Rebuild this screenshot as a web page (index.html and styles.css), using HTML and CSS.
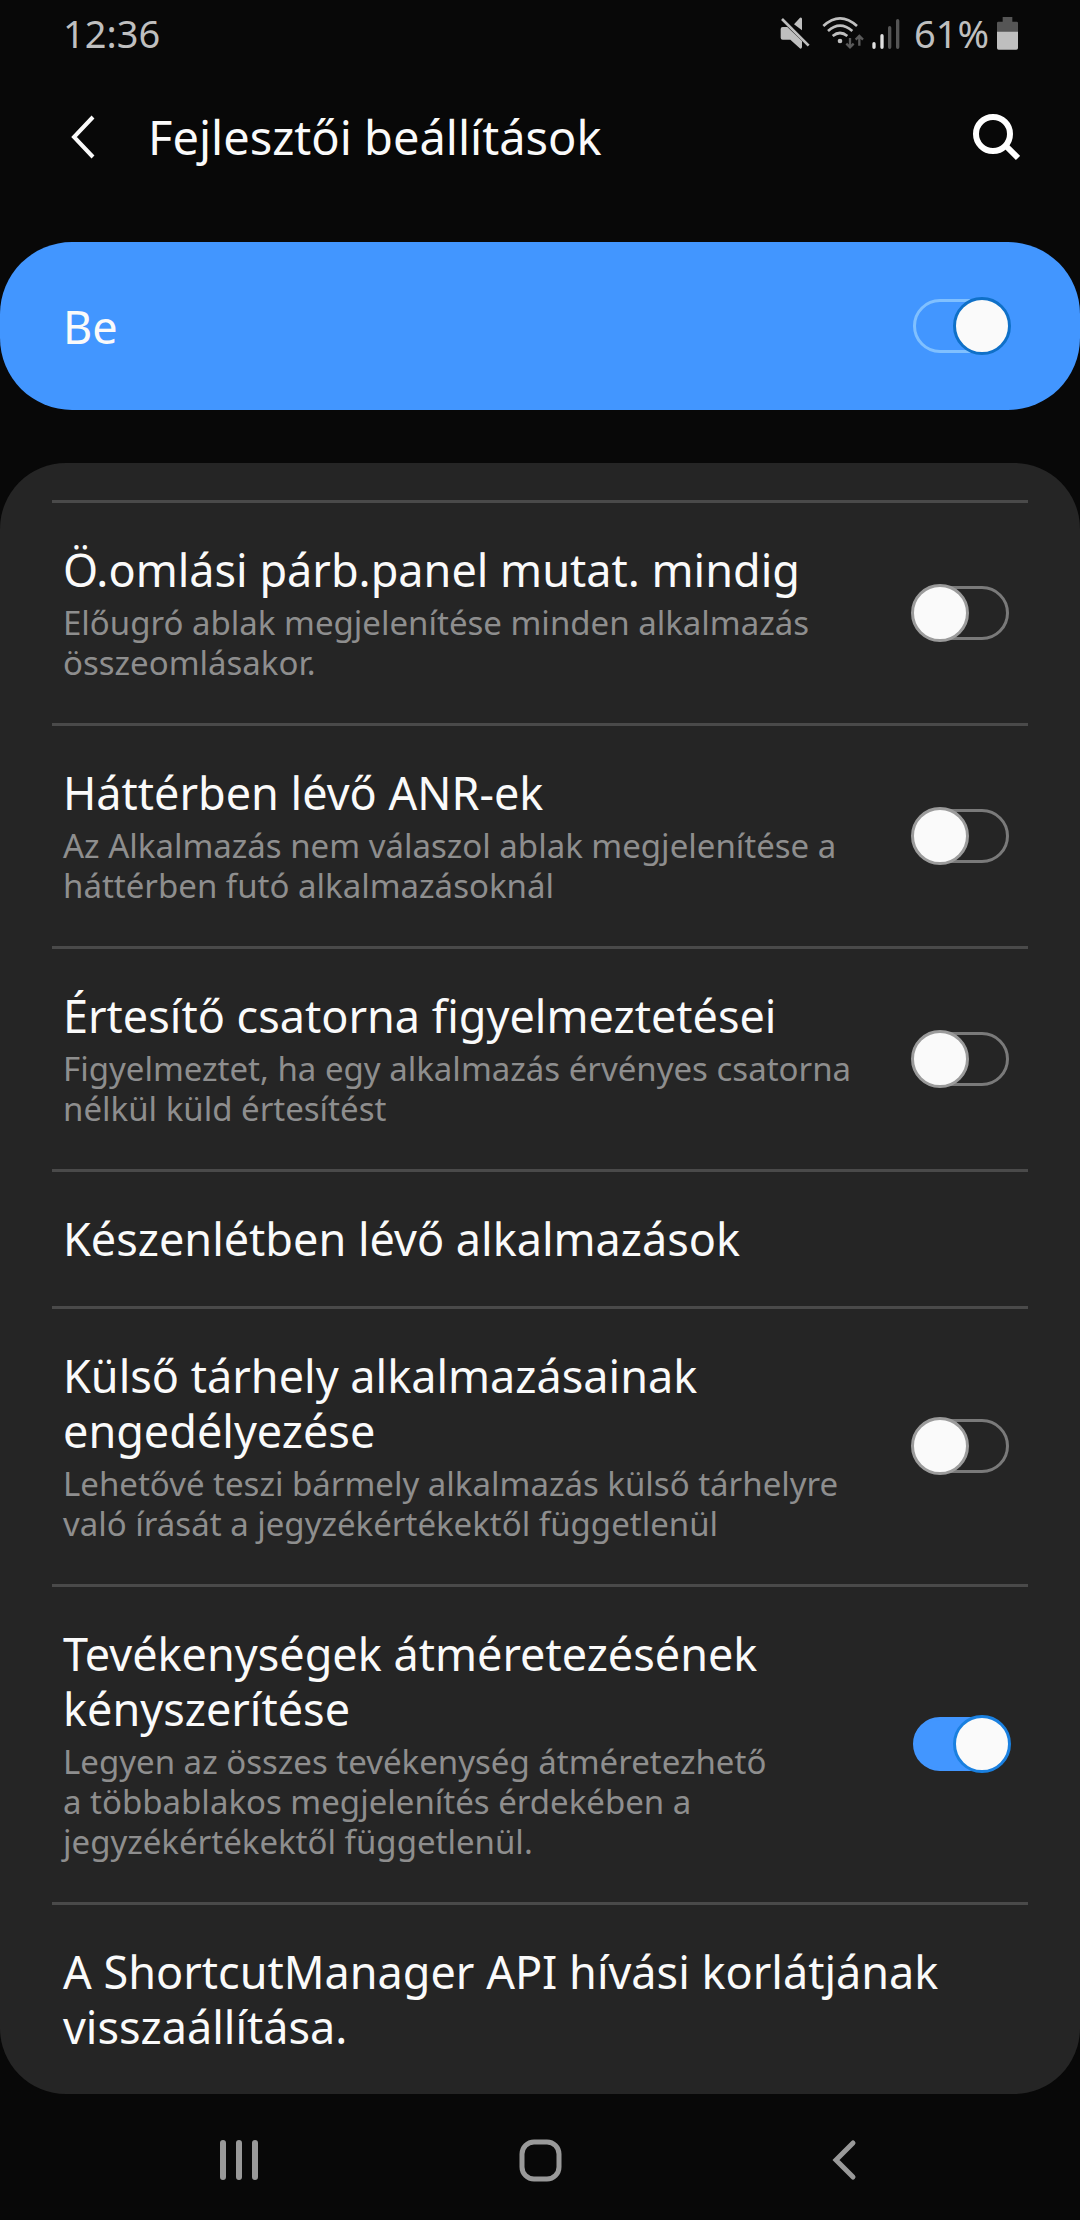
FILE: index.html
```
<!DOCTYPE html>
<html lang="hu">

<head>
    <meta charset="UTF-8">
    <meta name="viewport" content="width=device-width, initial-scale=1.0">
    <title>Fejlesztői beállítások</title>

    <link rel="stylesheet" href="styles.css">
</head>

<body>
    <div class="status-bar">
        <span>12:36</span>
        <div class="status-icons">
            <svg class="icon-mute" width="30" height="34" viewBox="108 43 90 102">
                <path fill="#bfbfbf" d="M110 82q0-6 6-6h14l44 42v18q0 5-5 5l-30-27h-23q-6 0-6-6zM150 68l18-20q6-2 6 4v34z" />
                <path stroke="#080808" stroke-width="6" d="M121 45l80 80" />
                <path stroke="#bfbfbf" stroke-width="8" d="M114 52l80 80" />
            </svg>
            <svg class="icon-wifi" width="42" height="34" viewBox="235 40 126 102">
                <g fill="none" stroke="#bfbfbf" stroke-width="8">
                    <path d="M239 70q50-46 101 0" />
                    <path d="M253 85q36-32 73 0" />
                    <path d="M267 100q22-18 44 0" />
                </g>
                <circle cx="289" cy="115" r="7" fill="#bfbfbf" />
                <path fill="none" stroke="#5a5a5a" stroke-width="7" d="M319 106v28M308 123l11 11 11-11M347 129v-28M336 111l11-11 11 11" />
            </svg>
            <svg class="icon-signal" width="28" height="34" viewBox="386 40 84 102">
                <g stroke-width="10" stroke-linecap="round">
                    <path stroke="#e0e0e0" d="M392 123v11M416 99v35" />
                    <path stroke="#555" d="M439 75v59M463 54v80" />
                </g>
            </svg>
            <span>61%</span>
            <svg class="icon-battery" width="21" height="34" viewBox="771 43 63 102">
                <path fill="#555" d="M788 46h29v14h13q4 0 4 4v27h-63V64q0-4 4-4h13z" />
                <path fill="#bfbfbf" d="M771 90h63v49q0 5-5 5h-53q-5 0-5-5z" />
            </svg>
        </div>
    </div>

    <header class="app-bar">
        <a href="#" class="back" aria-label="Vissza">
            <svg width="26" height="44" viewBox="0 0 26 44">
                <path fill="none" stroke="#fafafa" stroke-width="4" d="M23 2L4 22l19 20" />
            </svg>
        </a>
        <h1>Fejlesztői beállítások</h1>
        <button class="search" aria-label="Keresés">
            <svg width="48" height="48" viewBox="0 0 48 48">
                <g fill="none" stroke="#fff">
                    <circle cx="21" cy="21" r="17" stroke-width="6" />
                    <path stroke-width="6" d="M33 32l13 13" />
                </g>
            </svg>
        </button>
    </header>

    <main>
        <div class="master">
            <label for="developer">Be</label>
            <input type="checkbox" class="switch" id="developer" checked>
        </div>

        <ul class="settings">
            <li class="row">
                <div class="text">
                    <label for="crash">Ö.omlási párb.panel mutat. mindig</label>
                    <p>Előugró ablak megjelenítése minden alkalmazás összeomlásakor.</p>
                </div>
                <input type="checkbox" class="switch" id="crash">
            </li>
            <li class="row">
                <div class="text">
                    <label for="anr">Háttérben lévő ANR-ek</label>
                    <p>Az Alkalmazás nem válaszol ablak megjelenítése a háttérben futó alkalmazásoknál</p>
                </div>
                <input type="checkbox" class="switch" id="anr">
            </li>
            <li class="row">
                <div class="text">
                    <label for="channel">Értesítő csatorna figyelmeztetései</label>
                    <p>Figyelmeztet, ha egy alkalmazás érvényes csatorna nélkül küld értesítést</p>
                </div>
                <input type="checkbox" class="switch" id="channel">
            </li>
            <li class="row">
                <a href="#" class="text">Készenlétben lévő alkalmazások</a>
            </li>
            <li class="row">
                <div class="text">
                    <label for="external">Külső tárhely alkalmazásainak engedélyezése</label>
                    <p>Lehetővé teszi bármely alkalmazás külső tárhelyre való írását a jegyzékértékektől függetlenül</p>
                </div>
                <input type="checkbox" class="switch" id="external">
            </li>
            <li class="row">
                <div class="text">
                    <label for="resize">Tevékenységek átméretezésének kényszerítése</label>
                    <p>Legyen az összes tevékenység átméretezhető a&nbsp;többablakos megjelenítés érdekében a jegyzékértékektől függetlenül.</p>
                </div>
                <input type="checkbox" class="switch" id="resize" checked>
            </li>
            <li class="row">
                <a href="#" class="text">A ShortcutManager API hívási korlátjának visszaállítása.</a>
            </li>
        </ul>
    </main>

    <nav class="nav-bar">
        <button aria-label="Legutóbbiak">
            <svg width="44" height="44" viewBox="0 0 44 44">
                <path stroke="#999" stroke-width="6" stroke-linecap="round" d="M6 5v34M22 5v34M38 5v34" />
            </svg>
        </button>
        <button aria-label="Kezdőképernyő">
            <svg width="44" height="44" viewBox="0 0 44 44">
                <rect x="4" y="4" width="37" height="37" rx="12" fill="none" stroke="#999" stroke-width="5" />
            </svg>
        </button>
        <button aria-label="Vissza">
            <svg width="44" height="44" viewBox="0 0 44 44">
                <path fill="none" stroke="#999" stroke-width="5" stroke-linecap="round" d="M34 5L17 22l17 17" />
            </svg>
        </button>
    </nav>
</body>

</html>
```

FILE: styles.css
```
*,
*::before {
    padding: 0;
    margin: 0;
    box-sizing: border-box;
}

body {
    background-color: #080808;
    color: #fafafa;
    font-family: "Noto Sans", sans-serif;
    font-size: 45px;
    line-height: 55px;
}

a {
    color: inherit;
    text-decoration: none;
}

button {
    background: none;
    border: none;
    cursor: pointer;
}

svg {
    display: block;
}

.status-bar {
    display: flex;
    justify-content: space-between;
    align-items: center;
    height: 66px;
    padding: 0 62px 0 63px;
    color: #bfbfbf;
    font-size: 38px;
}

.status-icons {
    display: flex;
    align-items: center;
}

.icon-wifi {
    margin-left: 12px;
}

.icon-signal {
    margin: 0 14px 0 8px;
}

.icon-battery {
    margin-left: 8px;
}

.app-bar {
    display: flex;
    align-items: center;
    height: 142px;
    padding: 0 60px 0 70px;
}

.app-bar h1 {
    flex: 1;
    margin-left: 52px;
    font-size: 47px;
    font-weight: 400;
}

.master {
    display: flex;
    justify-content: space-between;
    align-items: center;
    height: 168px;
    margin: 34px 0 53px;
    padding: 0 71px 0 63px;
    border-radius: 72px;
    background-color: #4296ff;
}

.settings {
    list-style: none;
    padding: 37px 52px 0;
    border-radius: 66px;
    background-color: #252525;
}

.row {
    display: flex;
    justify-content: space-between;
    align-items: center;
    gap: 52px;
    padding: 42px 19px 40px 11px;
    box-shadow: inset 0 3px #4a4a4a;
}

.text {
    display: block;
    flex: 1;
}

.text p {
    margin-top: 6px;
    color: #8e8e8e;
    font-size: 33px;
    line-height: 40px;
}

/* on/off switch */
.switch {
    appearance: none;
    position: relative;
    flex: none;
    width: 96px;
    height: 54px;
    border: 3px solid #7a7a7a;
    border-radius: 27px;
    cursor: pointer;
}

.switch::before {
    content: "";
    position: absolute;
    top: -5px;
    left: -5px;
    width: 58px;
    height: 58px;
    border: 3px solid #9b9b9b;
    border-radius: 50%;
    background-color: #fafafa;
}

.switch:checked {
    border-color: #4296ff;
    background-color: #4296ff;
}

.switch:checked::before {
    left: auto;
    right: -5px;
    border-color: #1a80e0;
}

.master .switch {
    border-color: #80c0ff;
}

.master .switch::before {
    border-color: #0f70c8;
}

.nav-bar {
    display: flex;
    align-items: center;
    height: 126px;
    padding: 6px 88px 0;
}

.nav-bar button {
    display: flex;
    flex: 1;
    justify-content: center;
}
```
